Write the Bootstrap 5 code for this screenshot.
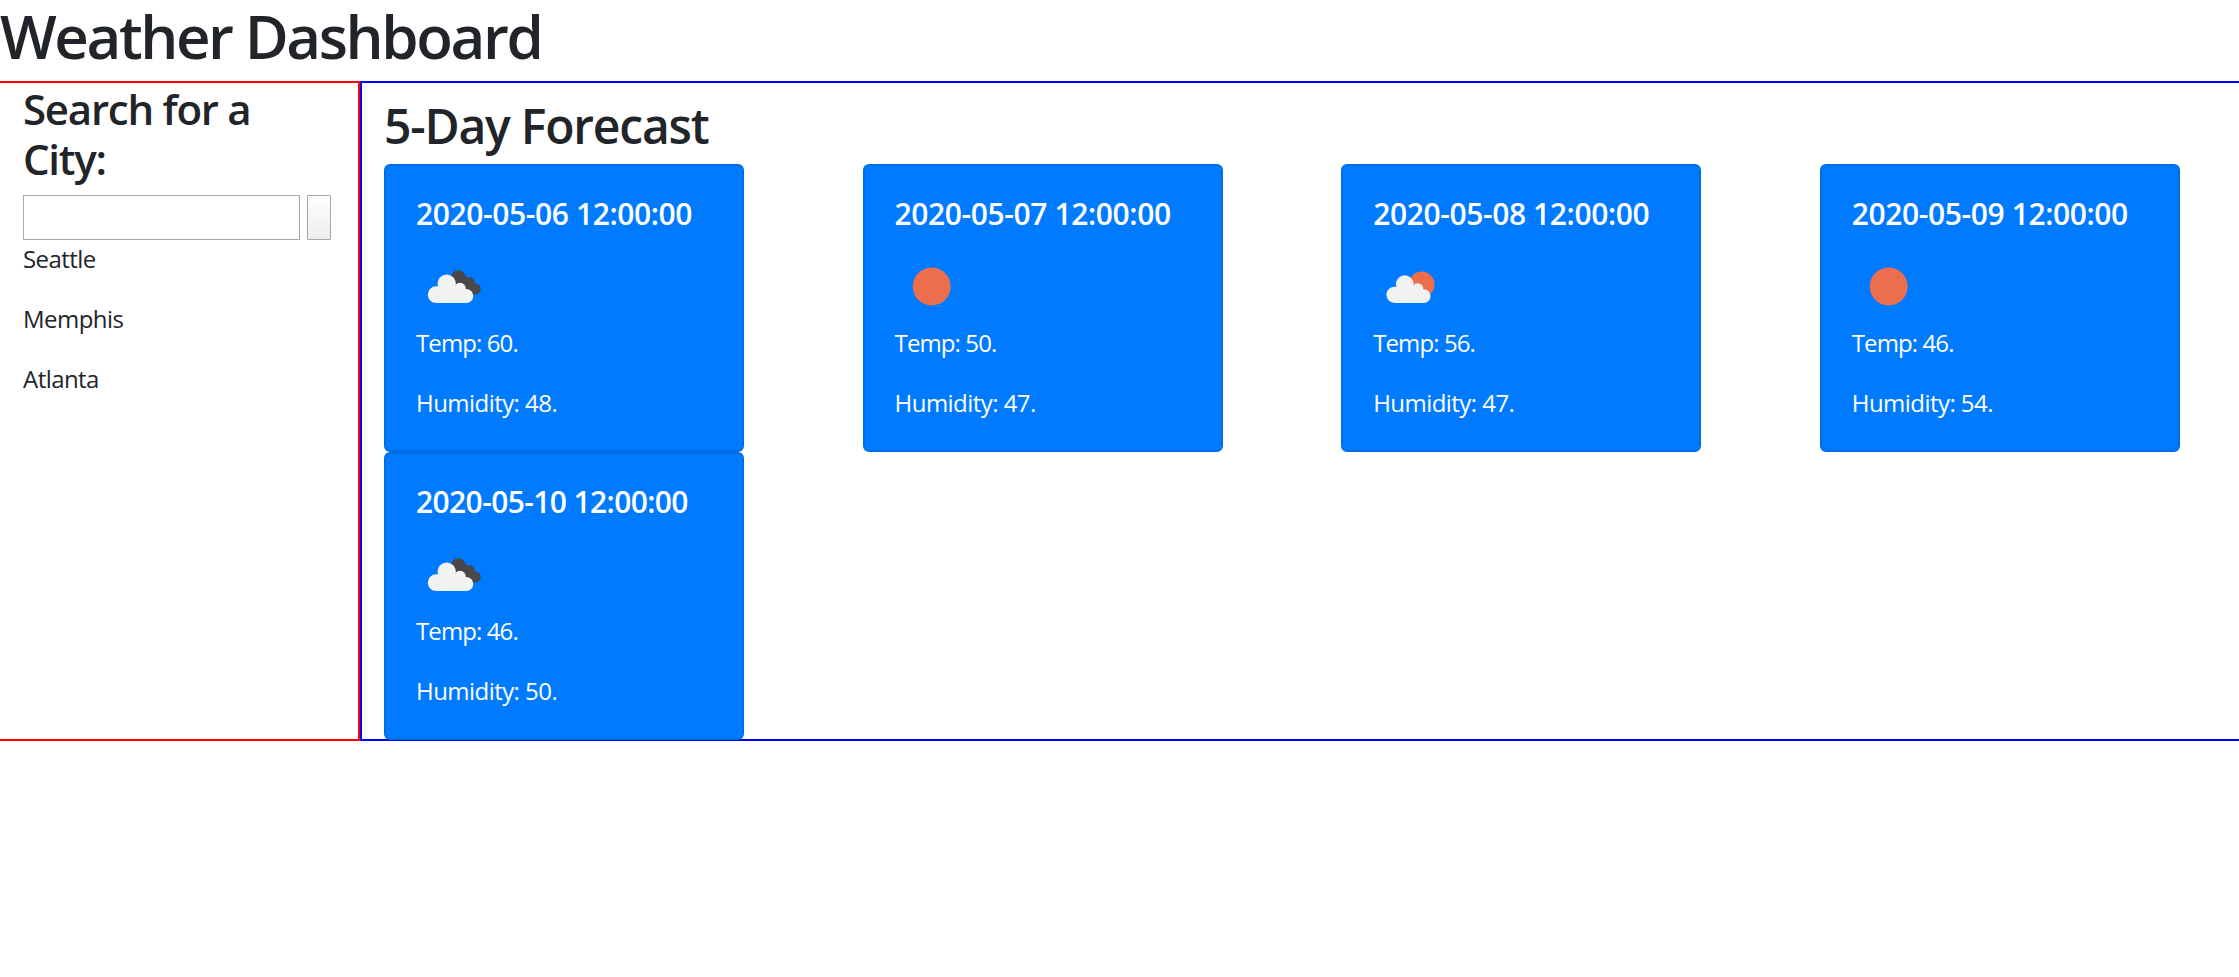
<!DOCTYPE html>
<html lang="en">
<head>
<meta charset="utf-8">
<title>Weather Dashboard</title>
<link href="https://cdn.jsdelivr.net/npm/bootstrap@5.3.0/dist/css/bootstrap.min.css" rel="stylesheet">
<style>
html { font-size: 24px; }
body { font-family: "Open Sans", "Noto Sans", sans-serif; color: #212529; letter-spacing: -.55px; }
h1, h2, h3, h5 { font-weight: 600; line-height: 1.2; white-space: nowrap; }
h1 { font-size: 60px; height: 81px; line-height: 72px; letter-spacing: -2.4px; }
h2 { font-size: 48px; margin: 0 0 9px; padding-top: 14px; letter-spacing: -1.2px; }
h3 { font-size: 42px; margin: 0 0 10px; padding-top: 1px; letter-spacing: -1.25px; }
.dash { height: 660px; }
.side { width: 360px; border: solid red; border-width: 2px 2px 2px 0; padding-left: 23px; }
.fore { border: solid blue; border-width: 2px 0 2px 2px; padding-left: 22px; }
.city-input { width: 277px; height: 45px; border: 1px solid #a9a9a9; border-radius: 0; padding: 0 8px; }
.city-btn { width: 24px; height: 45px; border: 1px solid #a6a6a6; border-radius: 1px; background: linear-gradient(#fff, #ededed); padding: 0; margin-left: 7px; }
.city-list { padding-top: 1px; }
.city-list p { margin-bottom: 24px; }
.days { display: grid; grid-template-columns: repeat(4, 478.6px); }
.day { width: 360px; height: 288px; background: #007bff; color: #fff; border: 2px solid #006fe6; border-radius: 6px; padding: 30px; }
.day h5 { font-size: 30px; margin: 0 0 18px; letter-spacing: -.4px; }
.day:last-child h5 { letter-spacing: -.62px; }
.day svg { display: block; width: 75px; height: 75px; }
.day p { margin: 0 0 24px; }
.day .temp { letter-spacing: -.9px; }
</style>
</head>
<body>
<svg width="0" height="0" class="position-absolute" aria-hidden="true">
  <defs>
    <g id="cloud" fill="#f2f2f2">
      <circle cx="30.7" cy="33.8" r="9.2"/><circle cx="20.2" cy="44.7" r="8.4"/>
      <circle cx="44" cy="38.6" r="5.8"/><circle cx="50.2" cy="46" r="7.1"/>
      <path d="M20 37H30L44 36 50 42V53.1H20z"/>
    </g>
    <g id="dark" fill="#484849">
      <circle cx="42.3" cy="27.2" r="7"/><circle cx="54" cy="32.2" r="5"/><circle cx="59.2" cy="38.9" r="5.5"/>
      <path d="M36 26L46 22 54 30 60 36 60 44.4 40 44z"/>
    </g>
  </defs>
</svg>
<h1 class="m-0">Weather Dashboard</h1>
<div class="dash d-flex">
  <aside class="side flex-shrink-0">
    <h3>Search for a<br>City:</h3>
    <div class="d-flex"><input class="city-input" type="text" aria-label="City"><button class="city-btn" aria-label="Search"></button></div>
    <div class="city-list"><p>Seattle</p><p>Memphis</p><p>Atlanta</p></div>
  </aside>
  <main class="fore flex-grow-1">
    <h2>5-Day Forecast</h2>
    <div class="days">
      <div class="day"><h5>2020-05-06 12:00:00</h5><svg viewBox="0 0 75 75"><use href="#dark"/><use href="#cloud"/></svg><p class="temp">Temp: 60.</p><p>Humidity: 48.</p></div>
      <div class="day"><h5>2020-05-07 12:00:00</h5><svg viewBox="0 0 75 75"><circle cx="36.7" cy="36.5" r="19" fill="#ec6e4c"/></svg><p class="temp">Temp: 50.</p><p>Humidity: 47.</p></div>
      <div class="day"><h5>2020-05-08 12:00:00</h5><svg viewBox="0 0 75 75"><circle cx="48.7" cy="34.5" r="12.9" fill="#ec6e4c"/><use href="#cloud" transform="translate(2 1.5) scale(.97)"/></svg><p class="temp">Temp: 56.</p><p>Humidity: 47.</p></div>
      <div class="day"><h5>2020-05-09 12:00:00</h5><svg viewBox="0 0 75 75"><circle cx="36.7" cy="36.5" r="19" fill="#ec6e4c"/></svg><p class="temp">Temp: 46.</p><p>Humidity: 54.</p></div>
      <div class="day"><h5>2020-05-10 12:00:00</h5><svg viewBox="0 0 75 75"><use href="#dark"/><use href="#cloud"/></svg><p class="temp">Temp: 46.</p><p>Humidity: 50.</p></div>
    </div>
  </main>
</div>
<script src="https://cdn.jsdelivr.net/npm/bootstrap@5.3.0/dist/js/bootstrap.bundle.min.js"></script>
</body>
</html>
